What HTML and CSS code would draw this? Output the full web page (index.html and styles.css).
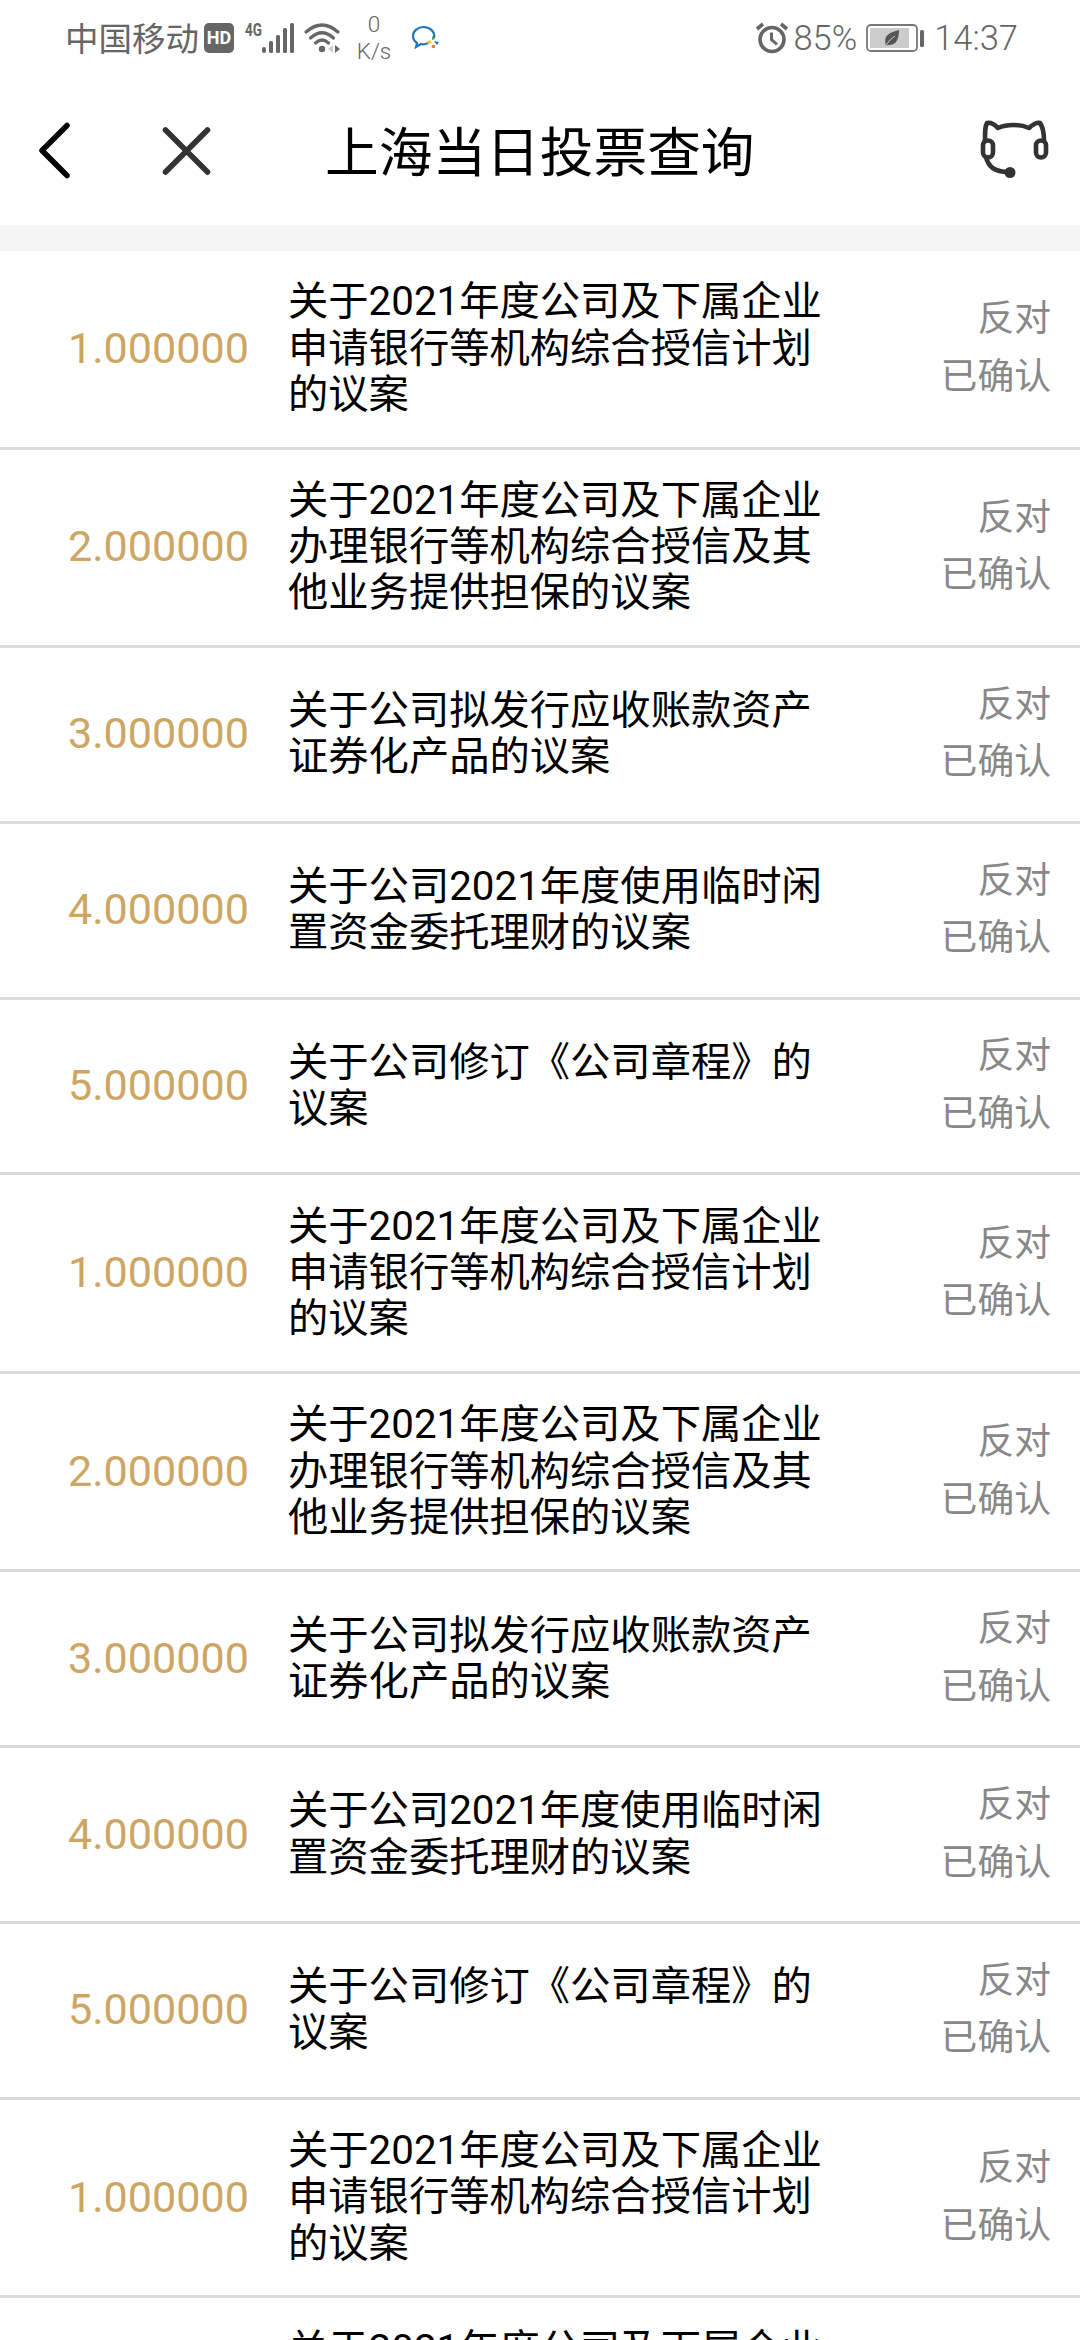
FILE: index.html
```
<!DOCTYPE html>
<html lang="zh-CN">
<head>
<meta charset="utf-8">
<title>上海当日投票查询</title>
<link rel="stylesheet" href="styles.css">
</head>
<body>
<div class="status-bar">
  <span class="carrier">中国移动</span>
  <span class="hd">HD</span>
  <svg class="signal" width="52" height="36" viewBox="0 0 52 36" fill="#666">
    <text class="net" x="0" y="16" textLength="17" lengthAdjust="spacingAndGlyphs">4G</text>
    <rect x="17" y="27" width="4" height="6" rx="2"/><rect x="24" y="21" width="4" height="12" rx="1.5"/><rect x="31" y="15" width="4" height="18" rx="1.5"/><rect x="38" y="8" width="4" height="25" rx="1.5"/><rect x="45" y="3" width="4" height="30" rx="1.5"/>
  </svg>
  <svg class="wifi" width="38" height="32" viewBox="0 0 38 32" fill="none" stroke="#666" stroke-width="3.2" stroke-linecap="round">
    <path d="M2 10Q18-4 34 10M6.500 16Q18 5.500 29.500 16M11.500 21Q18 15 24.500 21"/>
    <circle cx="18" cy="27" r="3.200" fill="#666" stroke="none"/>
    <path d="M29 23v8l-5-4z" fill="#ccc" stroke="none"/><path d="M31 23v8l5-4z" fill="#666" stroke="none"/>
  </svg>
  <span class="speed"><span>0</span><span>K/s</span></span>
  <svg class="chat" width="30" height="26" viewBox="0 0 30 26" fill="none">
    <path d="M23 13C24.500 6 18 2 12.500 2S2 6 2 11c0 3 1 5 4 7l-1 4 5-3c3 1 5 0 7-1" stroke="#2373b6" stroke-width="2.200"/>
    <path d="M21 11l3 3-3 1z" fill="#49a942"/><path d="M15 17l4-2 2 3-3 1z" fill="#f5c332"/><path d="M23 16l5 1-2 3z" fill="#2373b6"/><circle cx="22.500" cy="21.500" r="1.800" fill="#e77c2a"/>
  </svg>
  <div class="status-right">
    <svg class="alarm" width="32" height="32" viewBox="0 0 32 32" fill="none" stroke="#666" stroke-width="3.600">
      <circle cx="16" cy="17.500" r="12"/><path d="M15.500 10.500v7l5.500 5" stroke-width="3"/><path d="M1 7l6-5M31 7l-6-5"/>
    </svg>
    <span class="percent">85%</span>
    <svg class="battery" width="60" height="28" viewBox="0 0 60 28">
      <rect x="1" y="1" width="50" height="26" rx="4" fill="#fff" stroke="#777" stroke-width="1.800"/>
      <rect x="4" y="4" width="39" height="20" fill="#ccc"/>
      <path d="M20 22C17 10 24 9 33 6c0 10-3 16-12 15l-1 1z" fill="#555"/><path d="M20 21q4-6 9-9" stroke="#ccc" stroke-width="1" fill="none"/>
      <rect x="54" y="6" width="4" height="17" rx="1.500" fill="#666"/>
    </svg>
    <span class="clock">14:37</span>
  </div>
</div>
<header class="header">
  <svg class="back" width="36" height="60" viewBox="0 0 36 60" fill="none" stroke="#000" stroke-width="5.500" stroke-linecap="round" stroke-linejoin="round"><path d="M31 4.500L6 29.500l25 25"/></svg>
  <svg class="close" width="52" height="52" viewBox="0 0 52 52" fill="none" stroke="#333" stroke-width="5.600" stroke-linecap="round"><path d="M5.500 5l42 42M47.500 5l-42 42"/></svg>
  <h1 class="title">上海当日投票查询</h1>
  <svg class="service" width="70" height="60" viewBox="0 0 70 60" fill="none" stroke="#333" stroke-width="4.600" stroke-linejoin="round" stroke-linecap="round">
    <path d="M5 22C5 12 5 7 7 4c4-1 8 2 11 5 9-4 22-4 31 0 3-3 8-6 11-5 3 4 4 9 4 18"/>
    <rect x="3" y="21.500" width="10" height="17" rx="5"/><rect x="56" y="21.500" width="10" height="17" rx="5"/>
    <path d="M6 38c2 9 9 15 22 15"/><circle cx="30" cy="53.500" r="5.500" fill="#333" stroke="none"/>
  </svg>
</header>
<main class="list">
  <div class="row tall"><span class="no">1.000000</span><p class="name">关于2021年度公司及下属企业<br>申请银行等机构综合授信计划<br>的议案</p><div class="state"><span>反对</span><span>已确认</span></div></div>
  <div class="row tall"><span class="no">2.000000</span><p class="name">关于2021年度公司及下属企业<br>办理银行等机构综合授信及其<br>他业务提供担保的议案</p><div class="state"><span>反对</span><span>已确认</span></div></div>
  <div class="row"><span class="no">3.000000</span><p class="name">关于公司拟发行应收账款资产<br>证券化产品的议案</p><div class="state"><span>反对</span><span>已确认</span></div></div>
  <div class="row"><span class="no">4.000000</span><p class="name">关于公司2021年度使用临时闲<br>置资金委托理财的议案</p><div class="state"><span>反对</span><span>已确认</span></div></div>
  <div class="row"><span class="no">5.000000</span><p class="name">关于公司修订《公司章程》的<br>议案</p><div class="state"><span>反对</span><span>已确认</span></div></div>
  <div class="row tall"><span class="no">1.000000</span><p class="name">关于2021年度公司及下属企业<br>申请银行等机构综合授信计划<br>的议案</p><div class="state"><span>反对</span><span>已确认</span></div></div>
  <div class="row tall"><span class="no">2.000000</span><p class="name">关于2021年度公司及下属企业<br>办理银行等机构综合授信及其<br>他业务提供担保的议案</p><div class="state"><span>反对</span><span>已确认</span></div></div>
  <div class="row"><span class="no">3.000000</span><p class="name">关于公司拟发行应收账款资产<br>证券化产品的议案</p><div class="state"><span>反对</span><span>已确认</span></div></div>
  <div class="row"><span class="no">4.000000</span><p class="name">关于公司2021年度使用临时闲<br>置资金委托理财的议案</p><div class="state"><span>反对</span><span>已确认</span></div></div>
  <div class="row"><span class="no">5.000000</span><p class="name">关于公司修订《公司章程》的<br>议案</p><div class="state"><span>反对</span><span>已确认</span></div></div>
  <div class="row tall"><span class="no">1.000000</span><p class="name">关于2021年度公司及下属企业<br>申请银行等机构综合授信计划<br>的议案</p><div class="state"><span>反对</span><span>已确认</span></div></div>
  <div class="peek"><p class="name">关于2021年度公司及下属企业</p></div>
</main>
</body>
</html>
```
FILE: styles.css
```
* { box-sizing: border-box; }
body {
  margin: 0;
  height: 2340px;
  overflow: hidden;
  display: flex;
  flex-direction: column;
  background: #fff;
  color: #000;
  font-family: Roboto, "Noto Sans CJK SC", sans-serif;
}
svg { display: block; flex: none; overflow: visible; }
.status-bar {
  flex: none;
  height: 76px;
  padding-left: 65px;
  padding-right: 62px;
  display: flex;
  align-items: center;
  color: #666;
  white-space: nowrap;
}
.carrier { font-size: 33.5px; line-height: 40px; width: 139px; margin-top: 3px; }
.hd {
  width: 30px;
  height: 30px;
  border-radius: 5px;
  background: #666;
  color: #fff;
  font-size: 18px;
  font-weight: 700;
  line-height: 30px;
  text-align: center;
}
.signal { margin-left: 11px; }
.net { font-size: 19px; font-weight: 700; }
.wifi { margin-left: 7px; }
.speed {
  width: 40px;
  margin-left: 12px;
  display: flex;
  flex-direction: column;
  align-items: center;
  font-size: 22.5px;
  font-weight: 300;
  line-height: 27px;
}
.chat { margin-left: 17px; }
.status-right {
  margin-left: auto;
  display: flex;
  align-items: center;
  font-size: 34.5px;
  font-weight: 300;
}
.percent { margin-left: 5px; }
.battery { margin-left: 9px; }
.clock { margin-left: 8px; }
.header {
  flex: none;
  height: 149px;
  padding: 0 30px 0 36px;
  display: flex;
  align-items: center;
}
.close { margin-left: 88px; }
.title {
  margin: 7px 0 0 113px;
  font-size: 53.7px;
  line-height: 72px;
  font-weight: 400;
  white-space: nowrap;
}
.service { margin-left: auto; margin-bottom: 3px; }
.list {
  flex: 1;
  min-height: 0;
  overflow: hidden;
  border-top: 26px solid #f5f5f5;
}
.row {
  height: 175.8px;
  padding-left: 68px;
  padding-right: 29px;
  display: grid;
  grid-template-columns: 220px 1fr auto;
  align-items: center;
  border-bottom: 3px solid #dcdcdc;
}
.row.tall { height: 198.5px; }
.peek { padding: 29px 0 0 288px; }
.no { font-size: 43.1px; line-height: 50px; color: #cca662; }
.name {
  margin: 0;
  font-size: 40.3px;
  line-height: 46.2px;
  white-space: nowrap;
}
.state {
  display: flex;
  flex-direction: column;
  align-items: flex-end;
  margin-top: -2px;
  font-size: 36.8px;
  line-height: 57.6px;
  color: #888;
}
```
